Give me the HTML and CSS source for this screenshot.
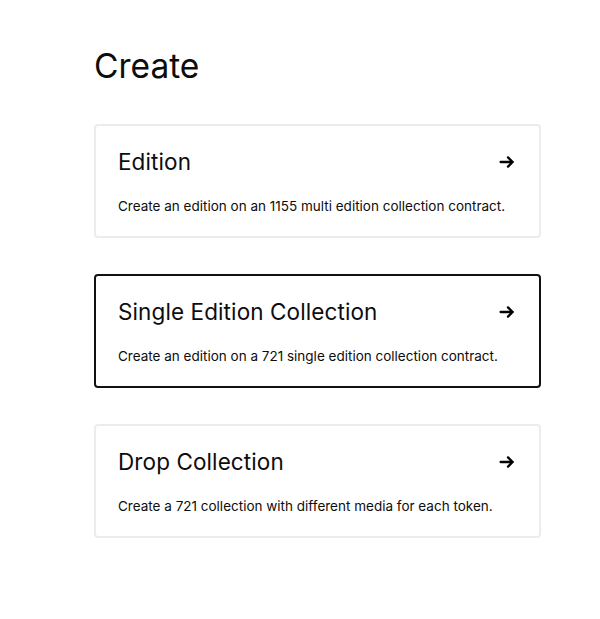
FILE: index.html
```html
<!DOCTYPE html>
<html lang="en">
<head>
    <meta charset="UTF-8">
    <title>Create</title>
    <link rel="stylesheet" href="styles.css">
</head>
<body>
<div class="page">
    <h1 class="page-title">Create</h1>
    <div class="options">
        <a class="option" href="#">
            <div class="option-head">
                <span class="option-title">Edition</span>
                <svg class="arrow" width="16" height="16" viewBox="0 0 16 16"><path d="M1.6 8h12.2M9 3.4L13.6 8 9 12.6"/></svg>
            </div>
            <p class="option-desc">Create an edition on an 1155 multi edition collection contract.</p>
        </a>
        <a class="option active" href="#">
            <div class="option-head">
                <span class="option-title">Single Edition Collection</span>
                <svg class="arrow" width="16" height="16" viewBox="0 0 16 16"><path d="M1.6 8h12.2M9 3.4L13.6 8 9 12.6"/></svg>
            </div>
            <p class="option-desc">Create an edition on a 721 single edition collection contract.</p>
        </a>
        <a class="option" href="#">
            <div class="option-head">
                <span class="option-title">Drop Collection</span>
                <svg class="arrow" width="16" height="16" viewBox="0 0 16 16"><path d="M1.6 8h12.2M9 3.4L13.6 8 9 12.6"/></svg>
            </div>
            <p class="option-desc">Create a 721 collection with different media for each token.</p>
        </a>
    </div>
</div>
</body>
</html>
```

FILE: styles.css
```css
*{
    margin: 0;
    padding: 0;
    box-sizing: border-box;
}
body{
    font-family: Inter, "Noto Sans", sans-serif;
    color: #0d0d0d;
    background: #fff;
}
.page{
    width: 447px;
    margin-left: 94px;
    padding-top: 46px;
}
.page-title{
    font-size: 33.5px;
    line-height: 40px;
    font-weight: 400;
    margin-bottom: 38px;
}
.options{
    display: flex;
    flex-direction: column;
    gap: 36px;
}
.option{
    display: block;
    text-decoration: none;
    color: inherit;
    border: 2px solid #ececec;
    border-radius: 4px;
    padding: 20px 24px 20px 22px;
}
.option.active{
    border-color: #111;
}
.option-head{
    display: flex;
    align-items: center;
    justify-content: space-between;
}
.option-title{
    font-size: 22.5px;
    line-height: 32px;
    letter-spacing: 0.1px;
}
.arrow{
    fill: none;
    stroke: #000;
    stroke-width: 2.3;
    stroke-linecap: round;
    stroke-linejoin: round;
}
.option-desc{
    margin-top: 18px;
    font-size: 13.5px;
    line-height: 20px;
}
```
